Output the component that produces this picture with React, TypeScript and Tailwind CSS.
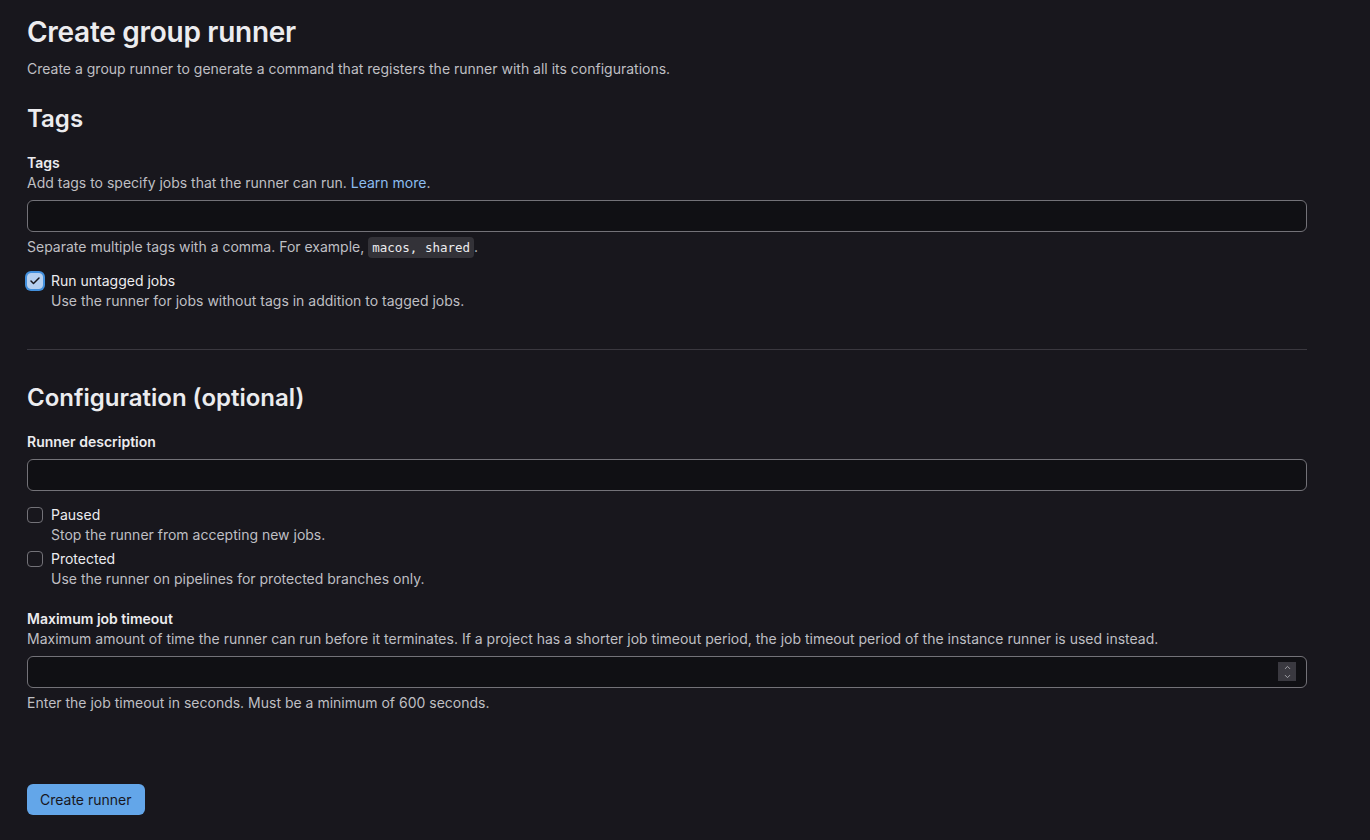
import { Check, ChevronUp, ChevronDown } from 'lucide-react'

const inputClass =
  'block w-full h-8 px-3 bg-[#101014] border border-[#737278] rounded-[6px] text-sm text-[#ececef] focus:outline-none'

function Box({ checked }: { checked?: boolean }) {
  if (checked) {
    return (
      <div className="w-4 h-4 mt-[2px] rounded-[4px] bg-[#b6d0f0] border border-[#b6d0f0] ring-2 ring-[#428fdc] flex items-center justify-center">
        <Check className="w-3 h-3 text-[#18171d]" strokeWidth={3} />
      </div>
    )
  }
  return <div className="w-4 h-4 mt-[2px] rounded-[4px] border border-[#737278] bg-[#18171d]" />
}

function CheckRow({ label, help, checked }: { label: string; help: string; checked?: boolean }) {
  return (
    <div className="flex gap-2">
      <Box checked={checked} />
      <div>
        <div className="text-sm leading-5 text-[#ececef]">{label}</div>
        <div className="text-sm leading-5 text-[#bfbfc3]">{help}</div>
      </div>
    </div>
  )
}

export default function App() {
  return (
    <div
      className="min-h-[840px] bg-[#18171d] text-[#ececef] px-[27px] pt-[14px] pb-10"
      style={{ fontFamily: 'Inter, "Noto Sans", sans-serif' }}
    >
      <div className="w-[1280px]">
        {/* Header */}
        <h1 className="text-[28px] leading-9 font-semibold tracking-[-0.01em]">Create group runner</h1>
        <p className="mt-[9px] text-sm leading-5 text-[#bfbfc3]">
          Create a group runner to generate a command that registers the runner with all its configurations.
        </p>

        {/* Tags */}
        <h2 className="mt-[24px] text-2xl leading-8 font-semibold">Tags</h2>
        <label className="block mt-[18px] text-sm leading-5 font-semibold">Tags</label>
        <p className="text-sm leading-5 text-[#bfbfc3]">
          Add tags to specify jobs that the runner can run.{' '}
          <a href="#" className="text-[#8cbdf0]">Learn more</a>.
        </p>
        <input type="text" className={`${inputClass} mt-[7px]`} />
        <p className="mt-[5px] h-5 text-sm leading-5 text-[#bfbfc3]">
          Separate multiple tags with a comma. For example,{' '}
          <code
            className="px-1 py-[3px] rounded-[4px] bg-[#333238] text-[#ececef] text-[12.5px] leading-4"
            style={{ fontFamily: '"DejaVu Sans Mono", "Liberation Mono", monospace' }}
          >
            macos, shared
          </code>
          .
        </p>
        <div className="mt-[14px]">
          <CheckRow
            checked
            label="Run untagged jobs"
            help="Use the runner for jobs without tags in addition to tagged jobs."
          />
        </div>

        <hr className="mt-[38px] border-0 border-t border-[#3a383f]" />

        {/* Configuration */}
        <h2 className="mt-[32px] text-2xl leading-8 font-semibold">Configuration (optional)</h2>
        <label className="block mt-[18px] text-sm leading-5 font-semibold">Runner description</label>
        <input type="text" className={`${inputClass} mt-[7px]`} />

        <div className="mt-[14px] flex flex-col gap-1">
          <CheckRow label="Paused" help="Stop the runner from accepting new jobs." />
          <CheckRow label="Protected" help="Use the runner on pipelines for protected branches only." />
        </div>

        <label className="block mt-[20px] text-sm leading-5 font-semibold">Maximum job timeout</label>
        <p className="text-sm leading-5 text-[#bfbfc3]">
          Maximum amount of time the runner can run before it terminates. If a project has a shorter job timeout period, the job timeout period of the instance runner is used instead.
        </p>
        <div className="relative mt-[7px]">
          <input type="text" className={inputClass} />
          <div className="absolute right-[11px] top-[6px] w-[18px] h-[19px] bg-[#3a3940] flex flex-col items-center justify-center">
            <ChevronUp className="w-[13px] h-[9px] text-[#a8a7ad]" strokeWidth={2.5} />
            <ChevronDown className="w-[13px] h-[9px] text-[#a8a7ad]" strokeWidth={2.5} />
          </div>
        </div>
        <p className="mt-[5px] text-sm leading-5 text-[#bfbfc3]">
          Enter the job timeout in seconds. Must be a minimum of 600 seconds.
        </p>

        <button
          type="button"
          className="mt-[71px] h-[31px] px-[13px] rounded-[6px] bg-[#63a6e9] text-sm text-[#18171d]"
        >
          Create runner
        </button>
      </div>
    </div>
  )
}
